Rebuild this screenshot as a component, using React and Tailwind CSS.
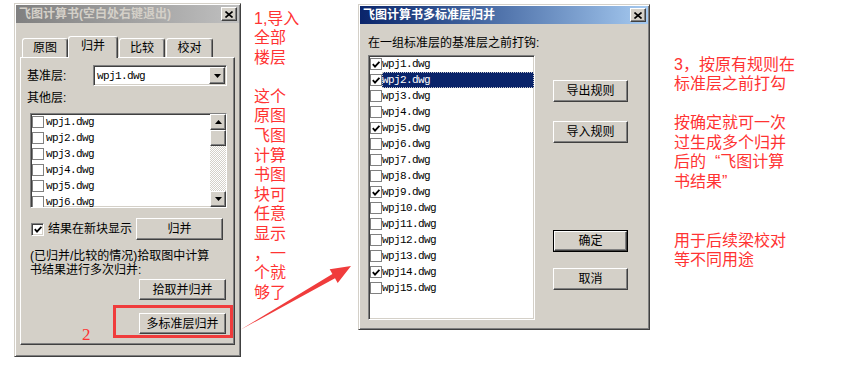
import React from 'react';

const files = Array.from({ length: 15 }, (_, i) => `wpj${i + 1}.dwg`);
const picked = [1, 2, 5, 9, 14];

function Raised({ className = '', children }) {
  return (
    <div className={`flex items-center justify-center bg-[#d4d0c8] border border-t-white border-l-white border-r-[#404040] border-b-[#404040] shadow-[inset_-1px_-1px_#808080] ${className}`}>
      {children}
    </div>
  );
}

function Sunken({ className = '', children }) {
  return (
    <div className={`bg-white border border-t-[#808080] border-l-[#808080] border-r-white border-b-white shadow-[inset_1px_1px_#404040,inset_-1px_-1px_#d4d0c8] ${className}`}>
      {children}
    </div>
  );
}

function Tick() {
  return (
    <svg width="8" height="7" viewBox="0 0 8 7">
      <path d="M0.8 3.2 L3 5.6 L7.4 0.8" stroke="#000" strokeWidth="1.8" fill="none" />
    </svg>
  );
}

function Tri({ up }) {
  return (
    <svg width="7" height="4" viewBox="0 0 7 4">
      {up ? <polygon points="3.5,0 7,4 0,4" fill="#000" /> : <polygon points="0,0 7,0 3.5,4" fill="#000" />}
    </svg>
  );
}

function FlatCheck({ on }) {
  return (
    <div className="w-[12px] h-[12px] shrink-0 border border-[#808080] bg-white flex items-center justify-center">
      {on && <Tick />}
    </div>
  );
}

function CloseBtn() {
  return (
    <Raised className="w-[16px] h-[14px] mr-[2px]">
      <svg width="8" height="7" viewBox="0 0 8 7">
        <path d="M0.5 0.5 L7.5 6.5 M7.5 0.5 L0.5 6.5" stroke="#000" strokeWidth="1.6" />
      </svg>
    </Raised>
  );
}

function Btn({ className = '', children }) {
  return <Raised className={`text-[12px] leading-[14px] ${className}`}>{children}</Raised>;
}

function Tab({ className = '', children }) {
  return (
    <div className={`flex items-center justify-center bg-[#d4d0c8] border-t border-l border-r border-t-white border-l-white border-r-[#404040] rounded-t-[3px] shadow-[inset_-1px_0_#808080] text-[12px] ${className}`}>
      {children}
    </div>
  );
}

function MergeDialog() {
  return (
    <div className="ml-[14px] mt-[3px] w-[227px] h-[354px] shrink-0 bg-[#d4d0c8] border border-t-[#d4d0c8] border-l-[#d4d0c8] border-r-[#404040] border-b-[#404040] shadow-[inset_1px_1px_#fff,inset_-1px_-1px_#808080] p-[1px] flex flex-col">
      <div className="h-[18px] flex items-center justify-between bg-linear-to-r from-[#808080] to-[#c0c0c0]">
        <span className="pl-[3px] font-bold text-[12px] text-[#d4d0c8] whitespace-nowrap">飞图计算书(空白处右键退出)</span>
        <CloseBtn />
      </div>

      <div className="flex items-end ml-[6px] mt-[13px] h-[21px]">
        <Tab className="w-[46px] h-[19px]">原图</Tab>
        <Tab className="w-[50px] h-[22px] -mb-px relative z-10 pb-[3px]">归并</Tab>
        <Tab className="ml-[1px] w-[46px] h-[19px]">比较</Tab>
        <Tab className="ml-[1px] w-[47px] h-[19px]">校对</Tab>
      </div>

      <div className="ml-[4px] w-[215px] h-[288px] border border-t-white border-l-white border-r-[#404040] border-b-[#404040] shadow-[inset_-1px_-1px_#808080] flex flex-col text-[12px] leading-[14px]">
        <div className="mt-[7px] h-[21px] flex items-center">
          <span className="ml-[6px] w-[66px]">基准层:</span>
          <Sunken className="w-[134px] h-[21px] flex items-center justify-between pl-[3px] pr-[1px]">
            <span className="font-['Liberation_Mono',monospace] text-[11px] tracking-[-0.6px]">wpj1.dwg</span>
            <Raised className="w-[16px] h-[17px]"><Tri /></Raised>
          </Sunken>
        </div>

        <div className="mt-[5px] h-[14px] ml-[6px]">其他层:</div>

        <Sunken className="ml-[9px] mt-[8px] w-[197px] h-[95px] flex overflow-hidden">
          <div className="flex-1 flex flex-col overflow-hidden pl-[1px]">
            {files.slice(0, 6).map((f) => (
              <div key={f} className="h-[16px] shrink-0 flex items-center">
                <FlatCheck on={false} />
                <span className="ml-[2px] font-['Liberation_Mono',monospace] text-[11px] tracking-[-0.6px]">{f}</span>
              </div>
            ))}
          </div>
          <div className="w-[16px] flex flex-col">
            <Raised className="h-[16px]"><Tri up /></Raised>
            <Raised className="h-[16px]" />
            <div className="flex-1 bg-[repeating-conic-gradient(#d4d0c8_0_25%,#ffffff_0_50%)] bg-[length:2px_2px]" />
            <Raised className="h-[16px]"><Tri /></Raised>
          </div>
        </Sunken>

        <div className="mt-[10px] h-[22px] flex items-center">
          <Sunken className="ml-[10px] w-[13px] h-[13px] flex items-center justify-center">
            <Tick />
          </Sunken>
          <span className="ml-[4px] w-[88px] whitespace-nowrap">结果在新块显示</span>
          <Btn className="w-[87px] h-[22px]">归并</Btn>
        </div>

        <div className="mt-[10px] ml-[9px] leading-[13.5px] whitespace-nowrap">
          (已归并/比较的情况)拾取图中计算
          <br />
          书结果进行多次归并:
        </div>

        <Btn className="mt-[2px] ml-[118px] w-[87px] h-[21px]">拾取并归并</Btn>

        <div className="mt-[5px] h-[33px] flex items-end">
          <span className="ml-[61px] w-[10px] mb-[-5px] font-['Liberation_Serif',serif] text-[17px] leading-none text-[#ff3333]">2</span>
          <div className="ml-[21px] w-[120px] h-[33px] border-[3px] border-[#f03c3c] pt-[5px] pl-[23px]">
            <Btn className="w-[87px] h-[21px]">多标准层归并</Btn>
          </div>
        </div>
      </div>
    </div>
  );
}

function MultiDialog() {
  return (
    <div className="mt-[4px] w-[292px] h-[326px] shrink-0 bg-[#d4d0c8] border border-t-[#d4d0c8] border-l-[#d4d0c8] border-r-[#404040] border-b-[#404040] shadow-[inset_1px_1px_#fff,inset_-1px_-1px_#808080] p-[1px] flex flex-col text-[12px] leading-[14px]">
      <div className="h-[18px] flex items-center justify-between bg-linear-to-r from-[#0a246a] to-[#a6caf0]">
        <span className="pl-[3px] font-bold text-[12px] text-white whitespace-nowrap">飞图计算书多标准层归并</span>
        <CloseBtn />
      </div>

      <div className="mt-[12px] h-[14px] ml-[8px] whitespace-nowrap">在一组标准层的基准层之前打钩:</div>

      <div className="mt-[5px] flex">
        <Sunken className="ml-[8px] w-[167px] h-[265px] flex flex-col pl-[1px]">
          {files.map((f, i) => (
            <div key={f} className="h-[16px] shrink-0 flex items-center">
              <FlatCheck on={picked.includes(i + 1)} />
              {i === 1 ? (
                <span className="flex-1 h-[16px] flex items-center bg-[#0a246a] text-white outline-1 outline-dotted outline-[#c8c8c8] -outline-offset-1 font-['Liberation_Mono',monospace] text-[11px] tracking-[-0.6px]">{f}</span>
              ) : (
                <span className="font-['Liberation_Mono',monospace] text-[11px] tracking-[-0.6px]">{f}</span>
              )}
            </div>
          ))}
        </Sunken>

        <div className="ml-[18px] w-[75px] flex flex-col">
          <Btn className="mt-[25px] h-[22px]">导出规则</Btn>
          <Btn className="mt-[19px] h-[22px]">导入规则</Btn>
          <div className="mt-[87px] h-[22px] border border-black flex">
            <Btn className="flex-1">确定</Btn>
          </div>
          <Btn className="mt-[16px] h-[22px]">取消</Btn>
        </div>
      </div>
    </div>
  );
}

export default function App() {
  return (
    <div className="relative w-[855px] h-[372px] bg-white overflow-hidden flex items-start text-black font-['Liberation_Sans','Noto_Sans_CJK_SC',sans-serif]">
      <MergeDialog />

      <div className="ml-[13px] mt-[8.5px] w-[104px] shrink-0 text-[16px] leading-[19.6px] text-[#ff3333] whitespace-nowrap">
        1,导入<br />全部<br />楼层<br /><br />
        这个<br />原图<br />飞图<br />计算<br />书图<br />块可<br />任意<br />显示<br />，一<br />个就<br />够了
      </div>

      <MultiDialog />

      <div className="ml-[24px] mt-[54.5px] text-[16px] leading-[19.6px] text-[#ff3333] whitespace-nowrap">
        3，按原有规则在<br />标准层之前打勾<br /><br />
        按确定就可一次<br />过生成多个归并<br />后的<span className="ml-[9px]">“</span>飞图计算<br />书结果<span className="mr-[9px]">”</span><br /><br /><br />
        用于后续梁校对<br />等不同用途
      </div>

      <svg className="absolute left-0 top-0 pointer-events-none" width="855" height="372" viewBox="0 0 855 372">
        <polygon points="240,330 332.4,273.9 329.7,269.2 351,266 337.7,283 335,278.3" fill="#f03c3c" />
      </svg>
    </div>
  );
}
